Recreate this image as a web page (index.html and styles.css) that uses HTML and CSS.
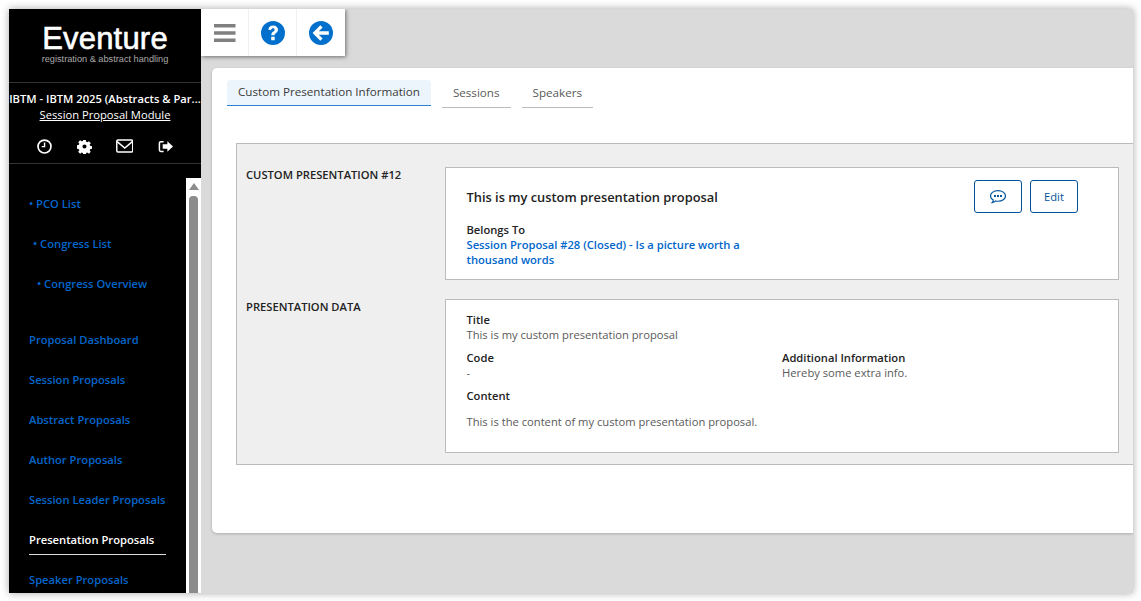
FILE: index.html
```html
<!DOCTYPE html>
<html lang="en">
<head>
<meta charset="utf-8">
<title>Eventure</title>
<link rel="stylesheet" href="styles.css">
</head>
<body>
<div class="window">
  <aside class="sidebar">
    <div class="logo">
      <div class="logo-name">Eventure</div>
      <div class="logo-sub">registration &amp; abstract handling</div>
    </div>
    <div class="module">
      <div class="congress">IBTM - IBTM 2025 (Abstracts &amp; Par...</div>
      <a class="module-link">Session Proposal Module</a>
    </div>
    <div class="side-icons">
      <svg class="si" viewBox="0 0 16 16"><circle cx="8" cy="8" r="6.900" fill="none" stroke="#fff" stroke-width="1.800"/><path d="M8.800 3.800v5.100H5V7.500h2.300V3.800z" fill="#fff"/></svg>
      <svg class="si" viewBox="0 0 16 16"><path fill="#fff" fill-rule="evenodd" d="M6.600 1h2.800l.4 2 1.100.5 1.800-1.100 2 2-1.200 1.700.5 1.100 2 .4v2.800l-2 .4-.5 1.100 1.200 1.700-2 2-1.800-1.100-1.100.5-.4 2H6.600l-.4-2-1.100-.5-1.800 1.100-2-2 1.200-1.700-.5-1.100-2-.4V6.600l2-.4.5-1.100-1.200-1.700 2-2 1.800 1.100 1.100-.5zM8 5.800a2.200 2.200 0 1 0 0 4.400 2.200 2.200 0 0 0 0-4.400z"/></svg>
      <svg class="si si-mail" viewBox="0 0 18 14"><rect x=".8" y=".8" width="16.400" height="12.400" rx="1.200" fill="none" stroke="#fff" stroke-width="1.500"/><path d="M1.200 2.500L9 9.200l7.800-6.700" fill="none" stroke="#fff" stroke-width="1.500"/></svg>
      <svg class="si" viewBox="0 0 16 16"><path fill="none" stroke="#fff" stroke-width="1.600" d="M6 2.800H3a1.500 1.500 0 0 0-1.500 1.500v7.400A1.500 1.500 0 0 0 3 13.200h3"/><path fill="#fff" d="M10 2.500L16 8l-6 5.500V10.500H5v-5h5z"/></svg>
    </div>
    <div class="nav-wrap">
      <nav class="nav">
        <a class="nav-item t0">• PCO List</a>
        <a class="nav-item t1">• Congress List</a>
        <a class="nav-item t2">• Congress Overview</a>
        <a class="nav-item gap">Proposal Dashboard</a>
        <a class="nav-item">Session Proposals</a>
        <a class="nav-item">Abstract Proposals</a>
        <a class="nav-item">Author Proposals</a>
        <a class="nav-item">Session Leader Proposals</a>
        <a class="nav-item active">Presentation Proposals</a>
        <a class="nav-item">Speaker Proposals</a>
      </nav>
      <div class="scrollbar">
        <div class="scroll-arrow"></div>
        <div class="scroll-thumb"></div>
      </div>
    </div>
  </aside>
  <main class="main">
    <div class="toolbar">
      <button class="tool">
        <svg class="burger" viewBox="0 0 22 18"><path fill="#808080" d="M0 0h21.500v3.500H0zM0 7.200h21.500v3.500H0zM0 14.500h21.500V18H0z"/></svg>
      </button>
      <button class="tool">
        <svg class="round" viewBox="0 0 24 24"><circle cx="12" cy="12" r="12" fill="#0070cc"/><path fill="#fff" d="M7.300 8.800C7.600 6 9.500 4.500 12.200 4.500c2.800 0 4.800 1.700 4.800 4.100 0 1.900-1 2.800-2.200 3.600-1 .7-1.200 1-1.200 2.100h-3.300c0-2 .5-2.900 1.900-3.800.9-.6 1.400-1 1.400-1.800 0-.9-.7-1.400-1.600-1.400-1 0-1.700.6-1.800 1.800zM10.200 15.700h3.500v3.500h-3.500z"/></svg>
      </button>
      <button class="tool">
        <svg class="round" viewBox="0 0 24 24"><circle cx="12" cy="12" r="12" fill="#0070cc"/><path fill="#fff" d="M11.300 4.300l2.300 2.300-3.800 3.700h10v3.400h-10l3.800 3.700-2.300 2.300L3.600 12z"/></svg>
      </button>
    </div>
    <section class="card">
      <div class="tabs">
        <a class="tab active">Custom Presentation Information</a>
        <a class="tab">Sessions</a>
        <a class="tab">Speakers</a>
      </div>
      <div class="panel">
        <div class="row first">
          <div class="row-label">CUSTOM PRESENTATION #12</div>
          <div class="box box-head">
            <div class="head-text">
              <div class="headline">This is my custom presentation proposal</div>
              <div class="label">Belongs To</div>
              <a class="link">Session Proposal #28 (Closed) - Is a picture worth a thousand words</a>
            </div>
            <div class="actions">
              <button class="btn">
                <svg class="chat" viewBox="0.500 1 15 13"><path fill="none" stroke="#00539b" stroke-width="1.100" d="M8 1.500c3.900 0 7 2.200 7 5s-3.100 5-7 5c-.8 0-1.500-.1-2.200-.3-.9.9-2 1.500-3.300 1.600.6-.7 1-1.500 1.100-2.500C2 9.400 1 8 1 6.500c0-2.800 3.100-5 7-5z"/><path fill="#00539b" d="M4.300 5.600h1.800v1.800H4.300zM7.100 5.600h1.800v1.800H7.100zM9.900 5.600h1.800v1.800H9.900z"/></svg>
              </button>
              <button class="btn">Edit</button>
            </div>
          </div>
        </div>
        <div class="row">
          <div class="row-label">PRESENTATION DATA</div>
          <div class="box box-data">
            <div class="field"><div class="label">Title</div><div class="value">This is my custom presentation proposal</div></div>
            <div class="two">
              <div class="field"><div class="label">Code</div><div class="value">-</div></div>
              <div class="field"><div class="label">Additional Information</div><div class="value">Hereby some extra info.</div></div>
            </div>
            <div class="field"><div class="label">Content</div><div class="value content">This is the content of my custom presentation proposal.</div></div>
          </div>
        </div>
      </div>
    </section>
  </main>
</div>
</body>
</html>
```

FILE: styles.css
```css
* { box-sizing: border-box; }
html, body { margin: 0; height: 100%; background: #fff; overflow: hidden; }
body { padding: 9px 8px 8px 9px; font-family: "Open Sans", "Liberation Sans", sans-serif; font-size: 11.200px; color: #5a5a5a; }
.window { display: flex; width: 1124px; height: 584px; background: #dadada; box-shadow: 0 0 8px rgba(0,0,0,.35); overflow: hidden; }
.sidebar { width: 192px; flex: none; background: #000; display: flex; flex-direction: column; color: #fff; }
.logo { height: 74px; padding-top: 11px; border-bottom: 1px solid #333; text-align: center; }
.logo-name { font-family: "Liberation Sans", sans-serif; font-size: 31px; line-height: 38px; letter-spacing: .2px; color: #fff; -webkit-text-stroke: .6px #fff; }
.logo-sub { font-family: "Liberation Sans", sans-serif; font-size: 9.200px; line-height: 8px; margin-top: -3px; color: #aaa; }
.module { text-align: center; padding-top: 8px; height: 49px; }
.congress { font-weight: 600; line-height: 16px; white-space: nowrap; overflow: hidden; }
.module-link { color: #fff; text-decoration: underline; line-height: 16px; }
.side-icons { height: 32px; border-bottom: 1px solid #333; display: grid; grid-template-columns: repeat(4, 40.300px); justify-items: center; align-items: center; padding: 0 0 3px 15px; }
.si { width: 15px; height: 15px; }
.si-mail { width: 17.500px; height: 14px; }
.nav-wrap { flex: 1; min-height: 0; display: flex; padding-top: 14px; overflow: hidden; }
.nav { width: 177px; flex: none; padding: 18px 0 0 20px; }
.nav-item { display: block; color: #0066cc; font-weight: 600; line-height: 16px; height: 40px; }
.t1 { padding-left: 4px; }
.t2 { padding-left: 8px; }
.gap { margin-top: 16px; }
.active { color: #fff; }
.nav-item.active { position: relative; }
.nav-item.active::after { content: ""; position: absolute; left: 0; top: 22px; width: 137px; height: 1px; background: #ddd; }
.scrollbar { width: 15px; flex: none; background: #fff; padding: 5px 3px 0; display: flex; flex-direction: column; align-items: center; gap: 6px; }
.scroll-arrow { width: 0; height: 0; border: 5px solid transparent; border-top: 0; border-bottom: 7px solid #8c8c8c; }
.scroll-thumb { width: 9px; flex: 1; background: #8c8c8c; border-radius: 4px 4px 0 0; }
.main { flex: 1; min-width: 0; position: relative; padding: 59px 0 0 11px; }
.toolbar { position: absolute; left: 0; top: 0; width: 144px; height: 47px; background: #fff; display: flex; box-shadow: 1px 1px 4px rgba(0,0,0,.5); }
.tool { width: 48px; height: 47px; background: none; border: 0; border-right: 1px solid #f0f0f0; padding: 0; display: flex; align-items: center; justify-content: center; }
.tool:last-child { border-right: 0; }
.burger { width: 22px; height: 18px; }
.round { width: 24px; height: 24px; }
.card { background: #fff; height: 465px; border-radius: 5px 0 0 5px; padding: 12px 0 0 15px; box-shadow: 0 1px 3px rgba(0,0,0,.2); }
.tabs { display: flex; gap: 11px; align-items: flex-start; }
.tab { display: block; height: 27px; line-height: 24px; padding: 0 11px; border-bottom: 1px solid #bbb; color: #5a5a5a; margin-top: 1px; font-size: 11.650px; }
.tab.active { height: 26px; margin-top: 0; background: #edf5fc; color: #3a3a3a; border-bottom: 1px solid #2a7fd0; border-radius: 4px 4px 0 0; }
.panel { margin: 35px 0 0 9px; height: 322px; background: #efefef; border: 1px solid #bbb; border-right: 0; padding: 23px 14px 0 9px; }
.row { display: flex; }
.row + .row { margin-top: 19px; }
.row-label { width: 199px; flex: none; font-weight: 600; color: #222; line-height: 16px; }
.box { flex: 1; background: #fff; border: 1px solid #bbb; padding: 0 20.500px; }
.box-head { height: 113px; display: flex; justify-content: space-between; position: relative; padding-right: 20px; }
.head-text { width: 300px; padding-top: 20px; }
.headline { font-size: 12.850px; font-weight: 600; color: #222; line-height: 18px; margin-bottom: 16px; }
.label { font-weight: 600; color: #222; line-height: 15px; }
.value { line-height: 15px; margin-bottom: 8px; }
.value.content { margin-top: 11px; }
.link { display: block; color: #0066cc; font-weight: 600; line-height: 15px; }
.actions { display: flex; gap: 8px; padding: 12px 20px 0 0; }
.btn { width: 48px; height: 33px; background: #fff; border: 1px solid #00539b; border-radius: 3px; color: #00539b; font: 11.200px "Open Sans", sans-serif; padding: 0; display: flex; align-items: center; justify-content: center; }
.chat { width: 16px; height: 14px; }
.box-data { height: 154px; padding-top: 12px; }
.two { display: flex; }
.two .field { width: 315.500px; }
```
